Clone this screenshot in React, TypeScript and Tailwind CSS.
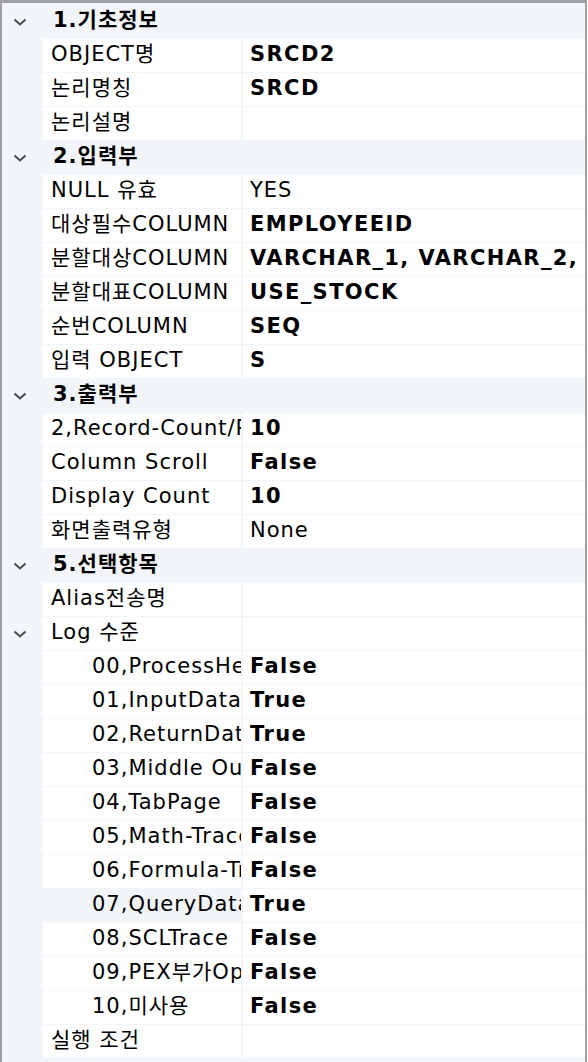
import type { ReactNode } from "react";

type Prop = { name: string; value?: string; bold?: boolean; indent?: boolean; selected?: boolean };

const sections: { title: string; rows: Prop[] }[] = [
  {
    title: "1.기초정보",
    rows: [
      { name: "OBJECT명", value: "SRCD2", bold: true },
      { name: "논리명칭", value: "SRCD", bold: true },
      { name: "논리설명" },
    ],
  },
  {
    title: "2.입력부",
    rows: [
      { name: "NULL 유효", value: "YES" },
      { name: "대상필수COLUMN", value: "EMPLOYEEID", bold: true },
      { name: "분할대상COLUMN", value: "VARCHAR_1, VARCHAR_2, VARCHAR_3", bold: true },
      { name: "분할대표COLUMN", value: "USE_STOCK", bold: true },
      { name: "순번COLUMN", value: "SEQ", bold: true },
      { name: "입력 OBJECT", value: "S", bold: true },
    ],
  },
  {
    title: "3.출력부",
    rows: [
      { name: "2,Record-Count/Page", value: "10", bold: true },
      { name: "Column Scroll", value: "False", bold: true },
      { name: "Display Count", value: "10", bold: true },
      { name: "화면출력유형", value: "None" },
    ],
  },
];

const logRows: Prop[] = [
  { name: "00,ProcessHeader", value: "False" },
  { name: "01,InputData", value: "True" },
  { name: "02,ReturnData", value: "True" },
  { name: "03,Middle Output", value: "False" },
  { name: "04,TabPage", value: "False" },
  { name: "05,Math-Trace", value: "False" },
  { name: "06,Formula-Trace", value: "False" },
  { name: "07,QueryData", value: "True", selected: true },
  { name: "08,SCLTrace", value: "False" },
  { name: "09,PEX부가Option", value: "False" },
  { name: "10,미사용", value: "False" },
];

function Chevron() {
  return (
    <svg width="14" height="8" viewBox="0 0 14 8" className="block">
      <path d="M1.5 1.5 L7 6.5 L12.5 1.5" fill="none" stroke="#4a4a4a" strokeWidth="2" />
    </svg>
  );
}

function Margin({ open }: { open?: boolean }) {
  return <div className="flex w-[41px] shrink-0 items-center pl-[11px]">{open && <Chevron />}</div>;
}

function Category({ title }: { title: string }) {
  return (
    <div className="mb-px flex h-[33px]">
      <Margin open />
      <div className="flex items-center pb-[3px] pl-[10px] font-bold">{title}</div>
    </div>
  );
}

function Row({ p, chevron }: { p: Prop; chevron?: boolean }) {
  const bold = p.bold || p.indent;
  return (
    <div className="mb-px flex h-[33px]">
      <Margin open={chevron} />
      <div
        className={`flex w-[198px] shrink-0 items-center overflow-hidden whitespace-nowrap pb-[3px] ${
          p.indent ? "pl-[49px]" : "pl-[8px]"
        } ${p.selected ? "bg-[#f2f5fa]" : "bg-white"}`}
      >
        {p.name}
      </div>
      <div className="ml-[2px] flex min-w-0 flex-1 items-center overflow-hidden whitespace-nowrap bg-white pb-[3px] pl-[7px]">
        <span className={bold ? "font-bold tracking-[1.4px]" : ""}>{p.value}</span>
      </div>
    </div>
  );
}

function Frame({ children }: { children: ReactNode }) {
  return (
    <div className="h-[1062px] w-[588px] overflow-hidden bg-white">
      <div className="h-full w-[587px] border-t-[3px] border-r-2 border-l-2 border-[#a0a0a0] bg-[#f2f5fa] pt-[2px] text-[21px] leading-none tracking-[1px] text-black [font-family:'DejaVu_Sans','Noto_Sans_CJK_KR',sans-serif]">
        {children}
      </div>
    </div>
  );
}

export default function App() {
  return (
    <Frame>
      {sections.map((s) => (
        <div key={s.title}>
          <Category title={s.title} />
          {s.rows.map((r) => (
            <Row key={r.name} p={r} />
          ))}
        </div>
      ))}
      <Category title="5.선택항목" />
      <Row p={{ name: "Alias전송명" }} />
      <Row p={{ name: "Log 수준" }} chevron />
      {logRows.map((r) => (
        <Row key={r.name} p={{ ...r, indent: true }} />
      ))}
      <Row p={{ name: "실행 조건" }} />
    </Frame>
  );
}
